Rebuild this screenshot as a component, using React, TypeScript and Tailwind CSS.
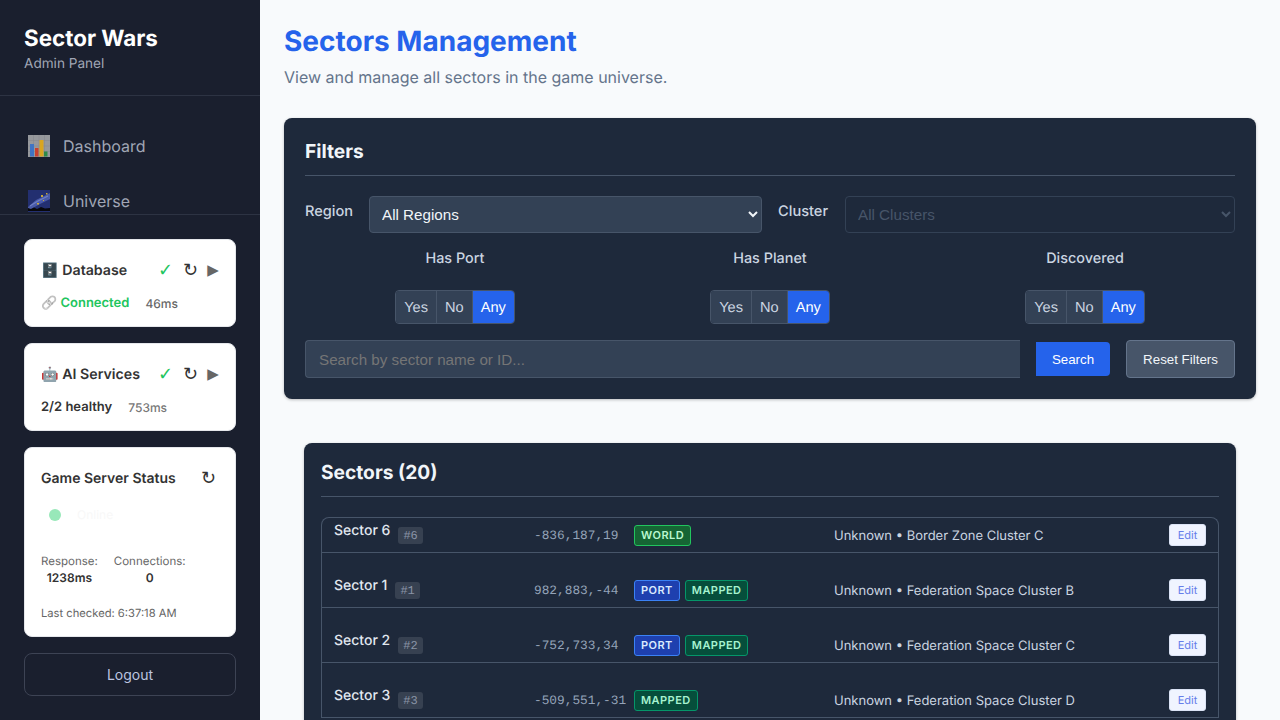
import React from 'react';

const inter = "[font-family:Inter,'Noto_Color_Emoji',sans-serif] [text-rendering:geometricPrecision]";
const arial = "[font-family:'Liberation_Sans',Arial,sans-serif]";
const symbol = "[font-family:'DejaVu_Sans',sans-serif]";
const mono = "[font-family:'Liberation_Mono',monospace]";

interface Sector {
  name: string;
  id: string;
  coords: string;
  badges: ('WORLD' | 'PORT' | 'MAPPED')[];
  location: string;
  first?: boolean;
}

const sectors: Sector[] = [
  { name: 'Sector 6', id: '#6', coords: '-836,187,19', badges: ['WORLD'], location: 'Unknown • Border Zone Cluster C', first: true },
  { name: 'Sector 1', id: '#1', coords: '982,883,-44', badges: ['PORT', 'MAPPED'], location: 'Unknown • Federation Space Cluster B' },
  { name: 'Sector 2', id: '#2', coords: '-752,733,34', badges: ['PORT', 'MAPPED'], location: 'Unknown • Federation Space Cluster C' },
  { name: 'Sector 3', id: '#3', coords: '-509,551,-31', badges: ['MAPPED'], location: 'Unknown • Federation Space Cluster D' },
];

const badgeClass = (badge: string) => {
  switch (badge) {
    case 'WORLD': return 'bg-[#166534] text-[#bbf7d0] border-[#22c55e]';
    case 'PORT': return 'bg-[#1e40af] text-[#dbeafe] border-[#3b82f6]';
    default: return 'bg-[#064e3b] text-[#a7f3d0] border-[#059669]';
  }
};

// the reference's emoji set is not installed, so these two are drawn
const ChartIcon = () => (
  <svg width="22" height="22" viewBox="0 0 22 22" className="shrink-0">
    <rect width="22" height="22" fill="#96989c" />
    <path d="M0 5.5H22M0 11H22M0 16.5H22M5.5 0V22M11 0V22M16.5 0V22" stroke="#85878c" strokeWidth="0.5" />
    <rect x="2" y="9" width="4" height="12.5" fill="#3f74c4" />
    <rect x="7" y="13" width="3.5" height="8.5" fill="#c8402f" />
    <rect x="11.5" y="5" width="4" height="16.5" fill="#d9a520" />
    <rect x="16" y="16.5" width="3.5" height="5" fill="#2f8a48" />
  </svg>
);

const NightIcon = () => (
  <svg width="22" height="22" viewBox="0 0 22 22" className="shrink-0">
    <rect width="22" height="22" fill="#232f70" />
    <path d="M0 17L8 10L22 3V9L12 14L3 19H0Z" fill="#4a5aa8" />
    <path d="M2 16L10 11L20 6" stroke="#6f7fc4" strokeWidth="1.2" fill="none" />
    <rect x="13" y="5" width="2" height="2" fill="#c9a83a" />
    <rect x="18" y="3" width="1.5" height="1.5" fill="#c9a83a" />
    <rect x="9" y="13" width="2" height="1.5" fill="#c9a83a" />
    <rect x="15" y="10" width="1" height="1" fill="#c9a83a" />
    <path d="M0 21V18L3 19L6 17.5L9 19L13 17L17 18.5L22 18V21Z" fill="#08080c" />
  </svg>
);

const StatusCard: React.FC<{ emoji: string; title: string; children: React.ReactNode }> = ({ emoji, title, children }) => (
  <div className="h-[88px] rounded-lg bg-white border border-[#e5e7eb] pl-4 pr-4 pt-[21px]">
    <div className="flex h-5 items-center">
      <span className="text-[14.2px] font-semibold text-[#333] whitespace-pre">{emoji} {title}</span>
      <span className={`ml-auto w-[14px] text-center text-lg leading-none font-bold text-[#22c55e] ${symbol}`}>✓</span>
      <span className={`ml-[11px] w-[14px] text-center text-lg leading-none text-[#333] ${symbol}`}>↻</span>
      <span className={`ml-[10px] -mt-[1px] w-[12px] text-center text-[15px] leading-none text-[#666] ${symbol}`}>▶</span>
    </div>
    <div className="mt-[15px] flex h-4 items-center text-[13px]">{children}</div>
  </div>
);

const Toggle: React.FC<{ label: string }> = ({ label }) => (
  <div className="flex flex-col items-center">
    <div className="h-5 text-[14.4px] leading-5 font-medium text-[#cbd5e1]">{label}</div>
    <div className={`mt-[21px] flex h-[34px] overflow-hidden rounded border border-[#475569] text-[14.6px] ${arial}`}>
      <span className="flex items-center bg-[#334155] px-2 pt-[4px] text-[#cbd5e1] border-r border-[#475569]">Yes</span>
      <span className="flex items-center bg-[#334155] px-2 pt-[4px] text-[#cbd5e1] border-r border-[#475569]">No</span>
      <span className="flex items-center bg-[#2563eb] px-2 pt-[4px] text-white">Any</span>
    </div>
  </div>
);

const SectorRow: React.FC<{ sector: Sector }> = ({ sector }) => (
  <div className={`flex items-end border-b border-[#475569] pl-3 pr-3 pb-[6px] ${sector.first ? 'h-[35px]' : 'h-[55px]'}`}>
    <div className="flex h-[21px] w-[200px] items-start">
      <span className="-mt-[4px] text-sm font-medium text-[#e2e8f0]">{sector.name}</span>
      <span className={`ml-2 mt-[2px] flex h-[17px] items-center rounded-[3px] bg-[#374151] px-[5px] text-xs text-[#8a94a6] ${mono}`}>{sector.id}</span>
    </div>
    <div className={`h-[21px] w-[100px] whitespace-nowrap text-[12.8px] leading-[21px] text-[#94a3b8] ${mono}`}>{sector.coords}</div>
    <div className="flex h-[21px] w-[200px] gap-[5px]">
      {sector.badges.map((badge) => (
        <span key={badge} className={`flex h-[21px] items-center rounded-[3px] border px-[6px] text-[11px] font-semibold tracking-[0.45px] ${badgeClass(badge)}`}>{badge}</span>
      ))}
    </div>
    <div className="mb-[-1px] h-[21px] flex-1 text-[13px] leading-[21px] text-[#cbd5e1]">{sector.location}</div>
    <div className="flex h-[22px] w-[37px] items-center justify-center rounded-[3px] border border-[#dbe3f5] bg-[#f0f4ff] text-[11px] text-[#667eea]">Edit</div>
  </div>
);

export default function App() {
  return (
    <div className={`flex h-[720px] w-[1280px] overflow-hidden bg-[#f8fafc] ${inter}`}>
      <aside className="flex h-full w-[260px] shrink-0 flex-col bg-[#1a1f2e]">
        <div className="h-[96px] border-b border-[#2d3343] pl-6 pt-[25px]">
          <h1 className="text-[22.4px] leading-[28px] font-bold text-white">Sector Wars</h1>
          <p className="mt-[1px] text-[13.6px] leading-5 text-[#a0a6b5]">Admin Panel</p>
        </div>
        <nav className="h-[119px] overflow-hidden border-b border-[#2d3343] pl-7 pt-[35px]">
          <div className="flex h-[30px] items-center gap-[13px] text-base text-[#a0a6b5]">
            <ChartIcon />Dashboard
          </div>
          <div className="mt-[25px] flex h-[30px] items-center gap-[13px] text-base text-[#a0a6b5]">
            <NightIcon />Universe
          </div>
        </nav>
        <div className="flex flex-col gap-4 px-6 pt-6">
          <StatusCard emoji="🗄️" title="Database">
            <span className="font-semibold text-[#22c55e]"><span className="grayscale opacity-70">🔗</span> Connected</span>
            <span className="ml-4 text-xs font-medium text-[#666]">46ms</span>
          </StatusCard>
          <StatusCard emoji="🤖" title="AI Services">
            <span className="font-semibold text-[#333]">2/2 healthy</span>
            <span className="ml-4 text-xs font-medium text-[#777]">753ms</span>
          </StatusCard>
          <div className="h-[190px] rounded-lg bg-white border border-[#e5e7eb] px-4 pt-[21px]">
            <div className="flex h-5 items-center justify-between pr-[3px]">
              <span className="text-sm font-semibold text-[#333]">Game Server Status</span>
              <span className={`text-lg leading-none text-[#333] ${symbol}`}>↻</span>
            </div>
            <div className="mt-[18px] flex h-4 items-center pl-2">
              <span className="h-3 w-3 rounded-full bg-[#98e8b9]" />
              <span className="ml-4 text-xs text-[#f8f8f8]">Online</span>
            </div>
            <div className="mt-[30px] flex gap-4 text-[11.5px] leading-4 text-[#666]">
              <div className="flex flex-col items-center">
                <span>Response:</span>
                <span className="mt-[1px] text-xs font-semibold text-[#333]">1238ms</span>
              </div>
              <div className="flex flex-col items-center">
                <span>Connections:</span>
                <span className="mt-[1px] text-xs font-semibold text-[#333]">0</span>
              </div>
            </div>
            <div className="mt-[19px] text-[11.2px] leading-4 text-[#666]">Last checked: 6:37:18 AM</div>
          </div>
          <button className="h-[43px] rounded-lg border border-[#3d4354] text-sm text-[#bcc5e0]">Logout</button>
        </div>
      </aside>

      <main className="min-w-0 flex-1 overflow-hidden px-6 pt-[24px]">
        <h2 className="text-[28px] leading-[34px] font-bold text-[#2563eb]">Sectors Management</h2>
        <p className="mt-[7px] text-base leading-[24px] text-[#64748b]">View and manage all sectors in the game universe.</p>

        <section className="mt-[29px] h-[281px] rounded-lg bg-[#1e293b] px-[21px] pt-[20px] shadow-[0_1px_3px_rgba(0,0,0,0.25)]">
          <h3 className="h-[38px] border-b border-[#475569] text-[19.2px] leading-[26px] font-bold text-[#f1f5f9]">Filters</h3>
          <div className="mt-[20px] flex h-[37px] items-start">
            <label className="mt-[5px] w-[64px] text-[14.6px] leading-5 font-medium text-[#cbd5e1]">Region</label>
            <select className={`h-[37px] w-[393px] rounded border border-[#475569] bg-[#334155] pl-2 text-[15.2px] text-[#f1f5f9] ${arial}`}>
              <option>All Regions</option>
            </select>
            <label className="mt-[5px] ml-4 w-[67px] text-[14.6px] leading-5 font-medium text-[#cbd5e1]">Cluster</label>
            <select disabled className={`h-[37px] flex-1 rounded border border-[#334155] bg-[#1e293b] pl-2 text-[15.2px] text-[#475569] ${arial}`}>
              <option>All Clusters</option>
            </select>
          </div>
          <div className="mt-[16px] grid grid-cols-3 gap-[15px]">
            <Toggle label="Has Port" />
            <Toggle label="Has Planet" />
            <Toggle label="Discovered" />
          </div>
          <div className={`mt-[16px] flex items-start ${arial}`}>
            <input
              placeholder="Search by sector name or ID..."
              className="h-[38px] w-[715px] rounded-l border border-r-0 border-[#475569] bg-[#334155] pl-[13px] text-[15.2px] text-white placeholder:text-[#757575]"
            />
            <button className="mt-[2px] ml-4 h-[34px] w-[74px] rounded-r bg-[#2563eb] pt-[2px] text-[13.33px] text-white">Search</button>
            <button className="ml-4 h-[38px] w-[109px] rounded border border-[#64748b] bg-[#475569] pt-[2px] text-[13.33px] text-[#f1f5f9]">Reset Filters</button>
          </div>
        </section>

        <section className="mt-[44px] mx-5 h-[400px] rounded-lg bg-[#1e293b] px-[17px] pt-4 shadow-[0_1px_3px_rgba(0,0,0,0.25)]">
          <h3 className="h-[38px] border-b border-[#475569] text-[19.2px] leading-[26px] font-bold text-[#f1f5f9]">Sectors (20)</h3>
          <div className="mt-5 rounded-t-lg border border-[#475569] border-b-0">
            {sectors.map((sector) => <SectorRow key={sector.id} sector={sector} />)}
          </div>
        </section>
      </main>
    </div>
  );
}
